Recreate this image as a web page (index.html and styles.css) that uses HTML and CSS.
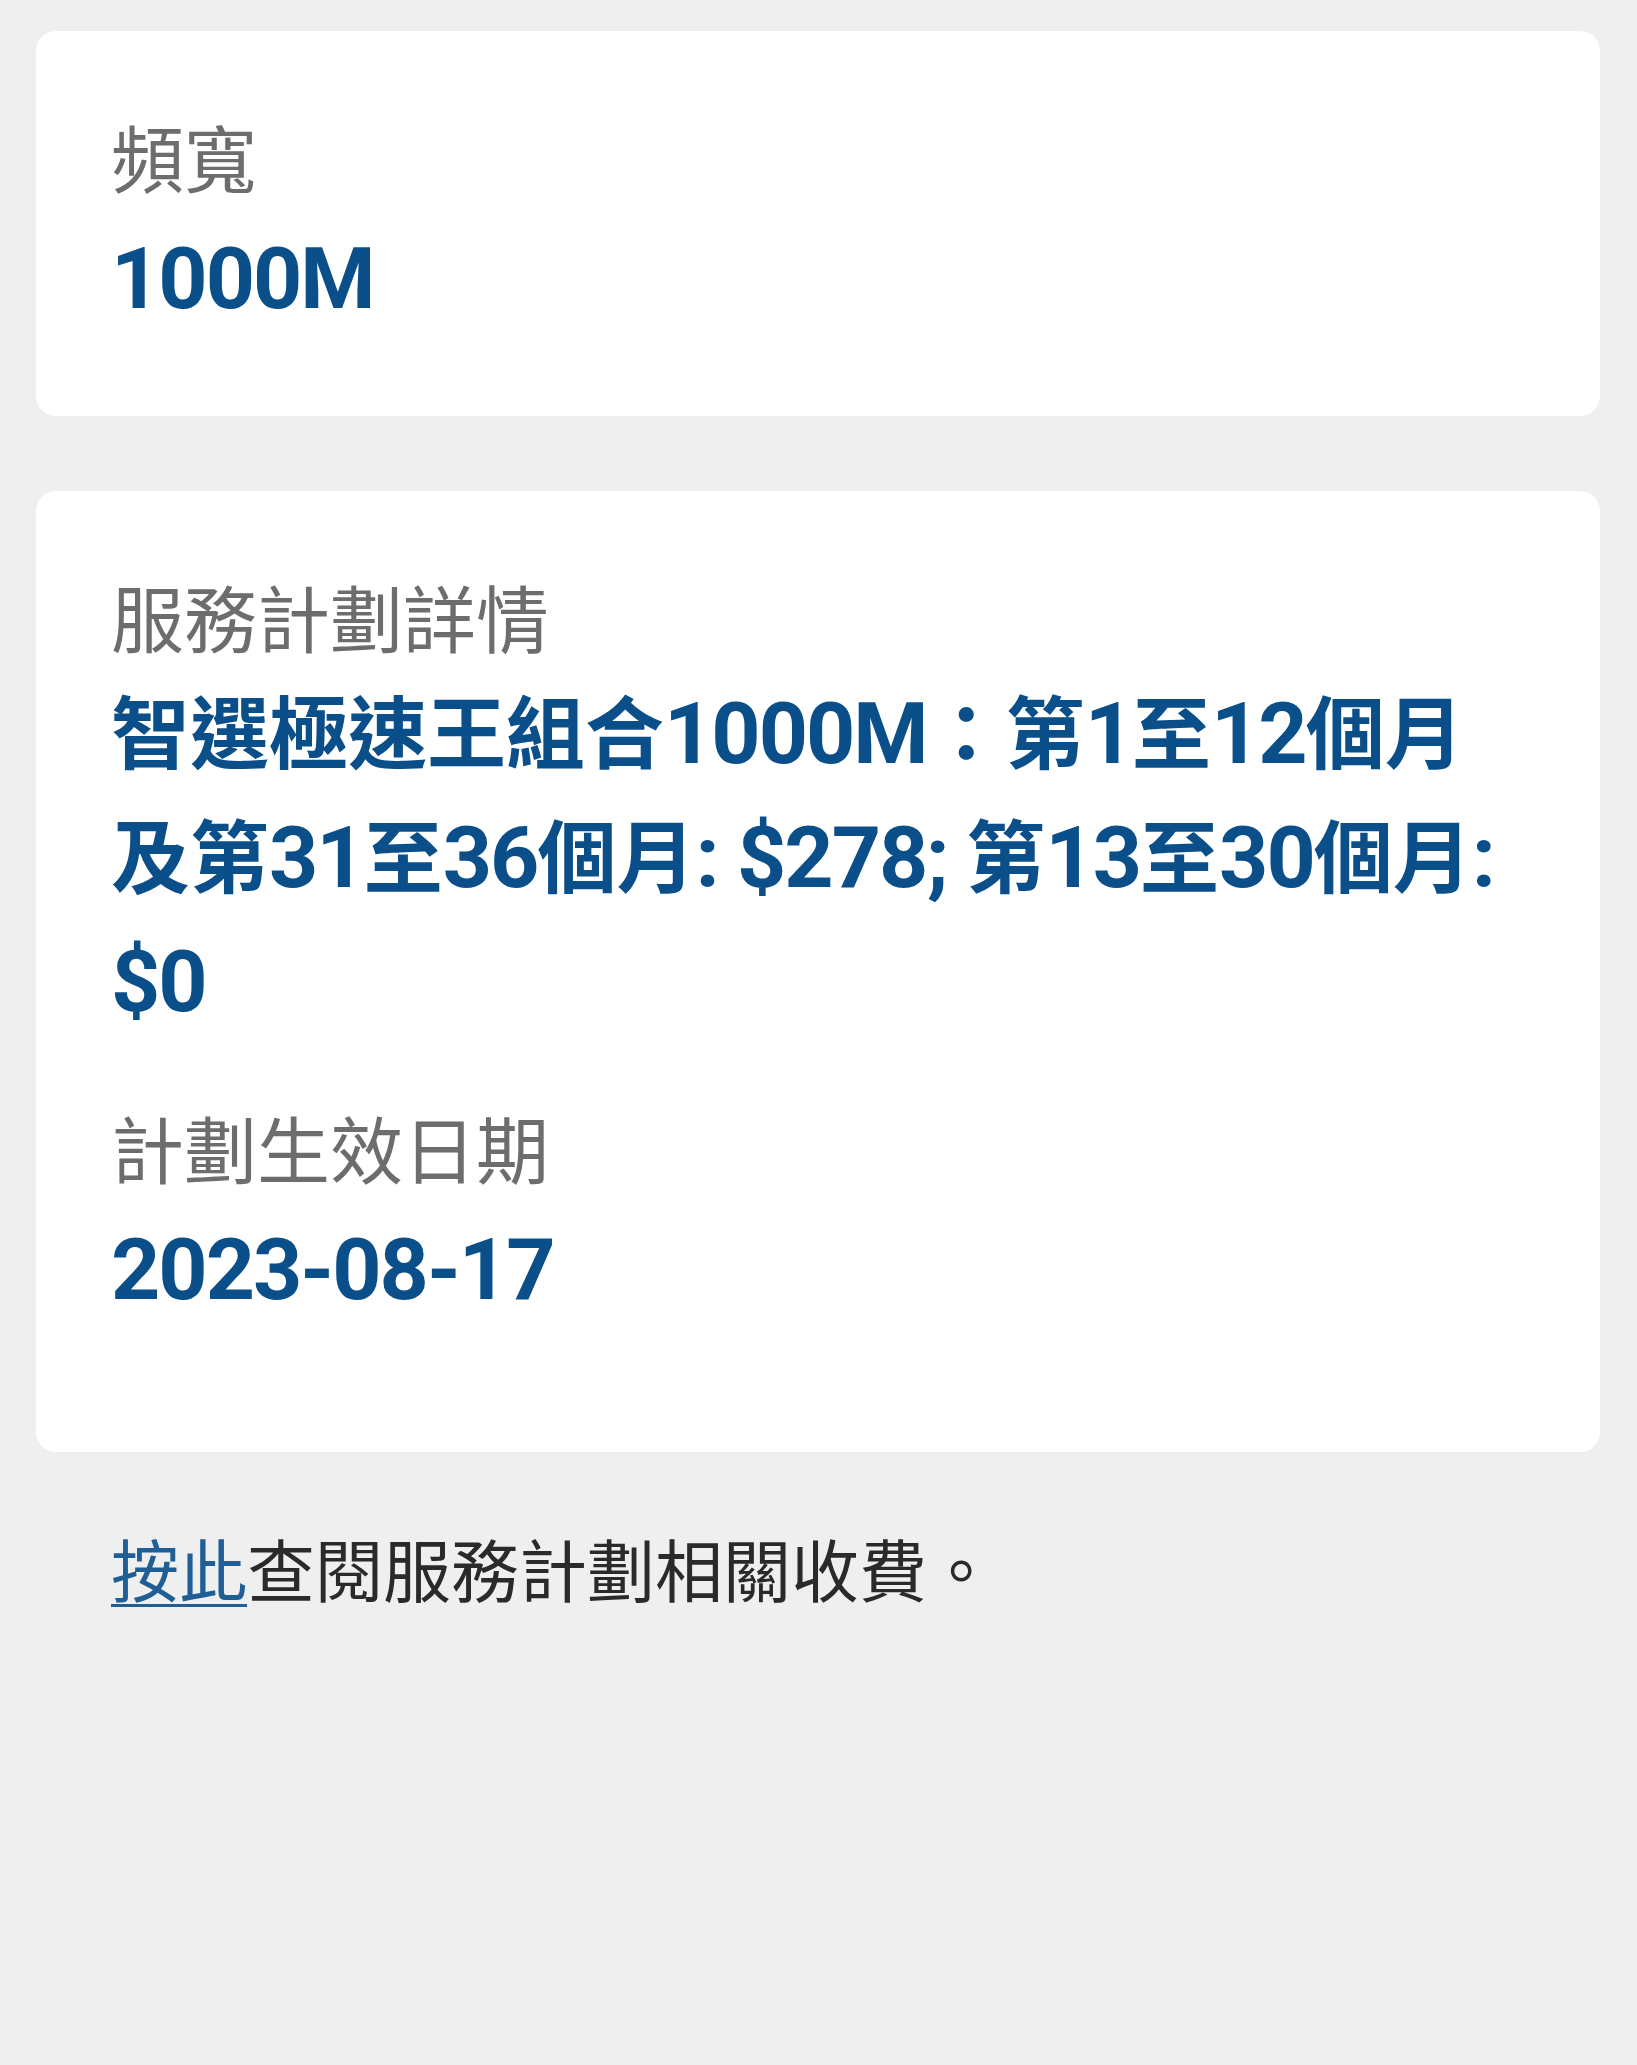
FILE: index.html
```html
<!DOCTYPE html>
<html lang="zh-Hant">
<head>
<meta charset="utf-8">
<title>服務計劃</title>
<link rel="stylesheet" href="styles.css">
</head>
<body>
<main class="page">
  <section class="card">
    <div class="field">
      <div class="label">頻寬</div>
      <div class="value">1000M</div>
    </div>
  </section>

  <section class="card card--plan">
    <div class="field">
      <div class="label">服務計劃詳情</div>
      <p class="plan"><span class="plan__cjk">智選極速王組合</span><span class="plan__num">1000M</span><span class="plan__cjk">：第</span><span class="plan__num">1</span><span class="plan__cjk">至</span><span class="plan__num">12</span><span class="plan__cjk">個月</span><span class="plan__cjk">及第</span><span class="plan__num">31</span><span class="plan__cjk">至</span><span class="plan__num">36</span><span class="plan__cjk">個月</span><span class="plan__num">: $278; </span><span class="plan__cjk">第</span><span class="plan__num">13</span><span class="plan__cjk">至</span><span class="plan__num">30</span><span class="plan__cjk">個月</span><span class="plan__num">:</span> <span class="plan__num">$0</span></p>
    </div>
    <div class="field">
      <div class="label">計劃生效日期</div>
      <div class="value">2023-08-17</div>
    </div>
  </section>

  <p class="note"><a class="note__link" href="#">按此</a>查閱服務計劃相關收費。</p>
</main>
</body>
</html>
```

FILE: styles.css
```css
html, body {
  margin: 0;
  padding: 0;
  background: #efefef;
}

body {
  font-family: "Noto Sans CJK TC", "Noto Sans", sans-serif;
}

.page {
  display: flex;
  flex-direction: column;
  padding: 31px 37px 0 36px;
}

.card {
  background: #ffffff;
  border-radius: 20px;
  padding: 80px 75px 76px 75px;
  margin-bottom: 75px;
}

.card--plan {
  padding-bottom: 122px;
  margin-bottom: 68px;
}

.field + .field {
  margin-top: 61px;
}

.label {
  font-family: "Noto Sans CJK TC", sans-serif;
  font-weight: 400;
  font-size: 73px;
  line-height: 88px;
  color: #6d6d6d;
}

.value {
  margin-top: 20px;
  font-family: Roboto, "Noto Sans CJK TC", sans-serif;
  font-weight: 700;
  font-size: 86px;
  letter-spacing: -2px;
  line-height: 120.5px;
  color: #0b4f8a;
}

/* plan description: CJK runs and Latin runs use different sizes */
.plan {
  margin: 10px 0 0;
  font-family: "Noto Sans CJK TC", sans-serif;
  font-weight: 700;
  font-size: 79px;
  line-height: 119px;
  color: #0b4f8a;
}

.plan__num {
  font-family: Roboto, sans-serif;
  font-size: 86px;
  letter-spacing: -2px;
}

.note {
  margin: 0;
  padding-left: 75px;
  font-family: "Noto Sans CJK TC", sans-serif;
  font-size: 68px;
  line-height: 96px;
  color: #2a2a2a;
}

.note__link {
  color: #1f5f95;
  text-decoration: underline;
  text-decoration-thickness: 3px;
  text-underline-offset: 7px;
}
```
